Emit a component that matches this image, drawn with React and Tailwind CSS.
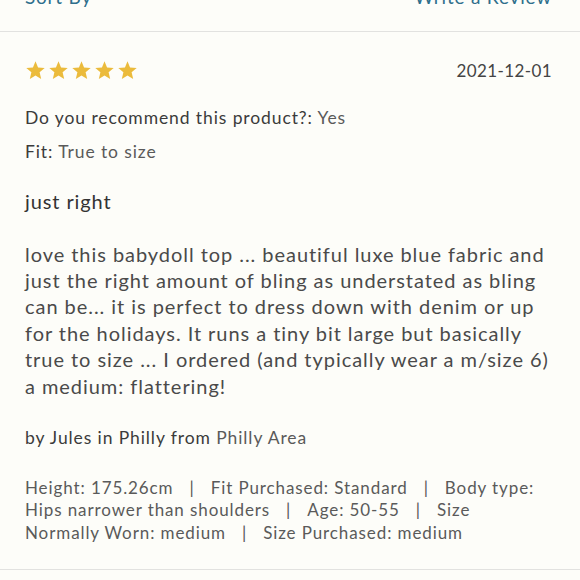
function Star() {
  return (
    <svg viewBox="0 0 24 24" className="w-[21px] h-[21px]" fill="#ebbb3c">
      <polygon points="12,1.5 14.9,8.6 22.5,9.2 16.7,14.1 18.5,21.6 12,17.6 5.5,21.6 7.3,14.1 1.5,9.2 9.1,8.6" />
    </svg>
  );
}

function Sep() {
  return <span className="mx-[16px] text-[#555]">|</span>;
}

export default function App() {
  return (
    <div className="w-[580px] h-[580px] overflow-hidden bg-[#fdfdf9] font-['Lato','Noto_Sans',sans-serif] text-[#3b3b3b]">
      {/* top bar, cut off by the viewport */}
      <div className="h-[32px] border-b border-[#e2e2e0] px-[25px] pr-[28px] flex justify-between items-start overflow-hidden">
        <span className="-mt-[17px] text-[19px] text-[#2f6f8c] tracking-[0.8px]">Sort By</span>
        <span className="-mt-[17px] text-[19px] text-[#2f6f8c] tracking-[0.8px]">Write a Review</span>
      </div>

      <div className="px-[25px] pr-[28px]">
        <div className="flex justify-between items-center mt-[26px]">
          <div className="flex gap-[2px]">
            <Star />
            <Star />
            <Star />
            <Star />
            <Star />
          </div>
          <span className="text-[17px] text-[#444] tracking-[0.4px]">2021-12-01</span>
        </div>

        <p className="mt-[22px] text-[17.5px] tracking-[0.9px] leading-[24px]">
          Do you recommend this product?: <span className="text-[#5a5a5a]">Yes</span>
        </p>
        <p className="mt-[10px] text-[17.5px] tracking-[0.9px] leading-[24px]">
          Fit: <span className="text-[#5a5a5a]">True to size</span>
        </p>

        <h3 className="mt-[24px] text-[20px] tracking-[0.9px] leading-[26px] text-[#333]">just right</h3>

        <p className="mt-[27px] text-[20px] leading-[26.4px] tracking-[0.95px] text-[#4a4a4a]">
          love this babydoll top ... beautiful luxe blue fabric and just the right amount of bling as understated as bling can be... it is perfect to dress down with denim or up for the holidays. It runs a tiny bit large but basically true to size ... I ordered (and typically wear a m/size 6) a medium: flattering!
        </p>

        <p className="mt-[27px] text-[17.5px] tracking-[0.9px] leading-[24px]">
          by Jules in Philly from <span className="text-[#5a5a5a]">Philly Area</span>
        </p>

        <p className="mt-[27px] max-w-[518px] text-[17px] tracking-[0.9px] leading-[22.5px] text-[#5a5a5a]">
          Height: 175.26cm<Sep />Fit Purchased: Standard<Sep />Body type: Hips narrower than shoulders<Sep />Age: 50-55<Sep />Size Normally Worn: medium<Sep />Size Purchased: medium
        </p>
      </div>
      <div className="mt-[25px] border-b border-[#e2e2e0]" />
    </div>
  );
}
